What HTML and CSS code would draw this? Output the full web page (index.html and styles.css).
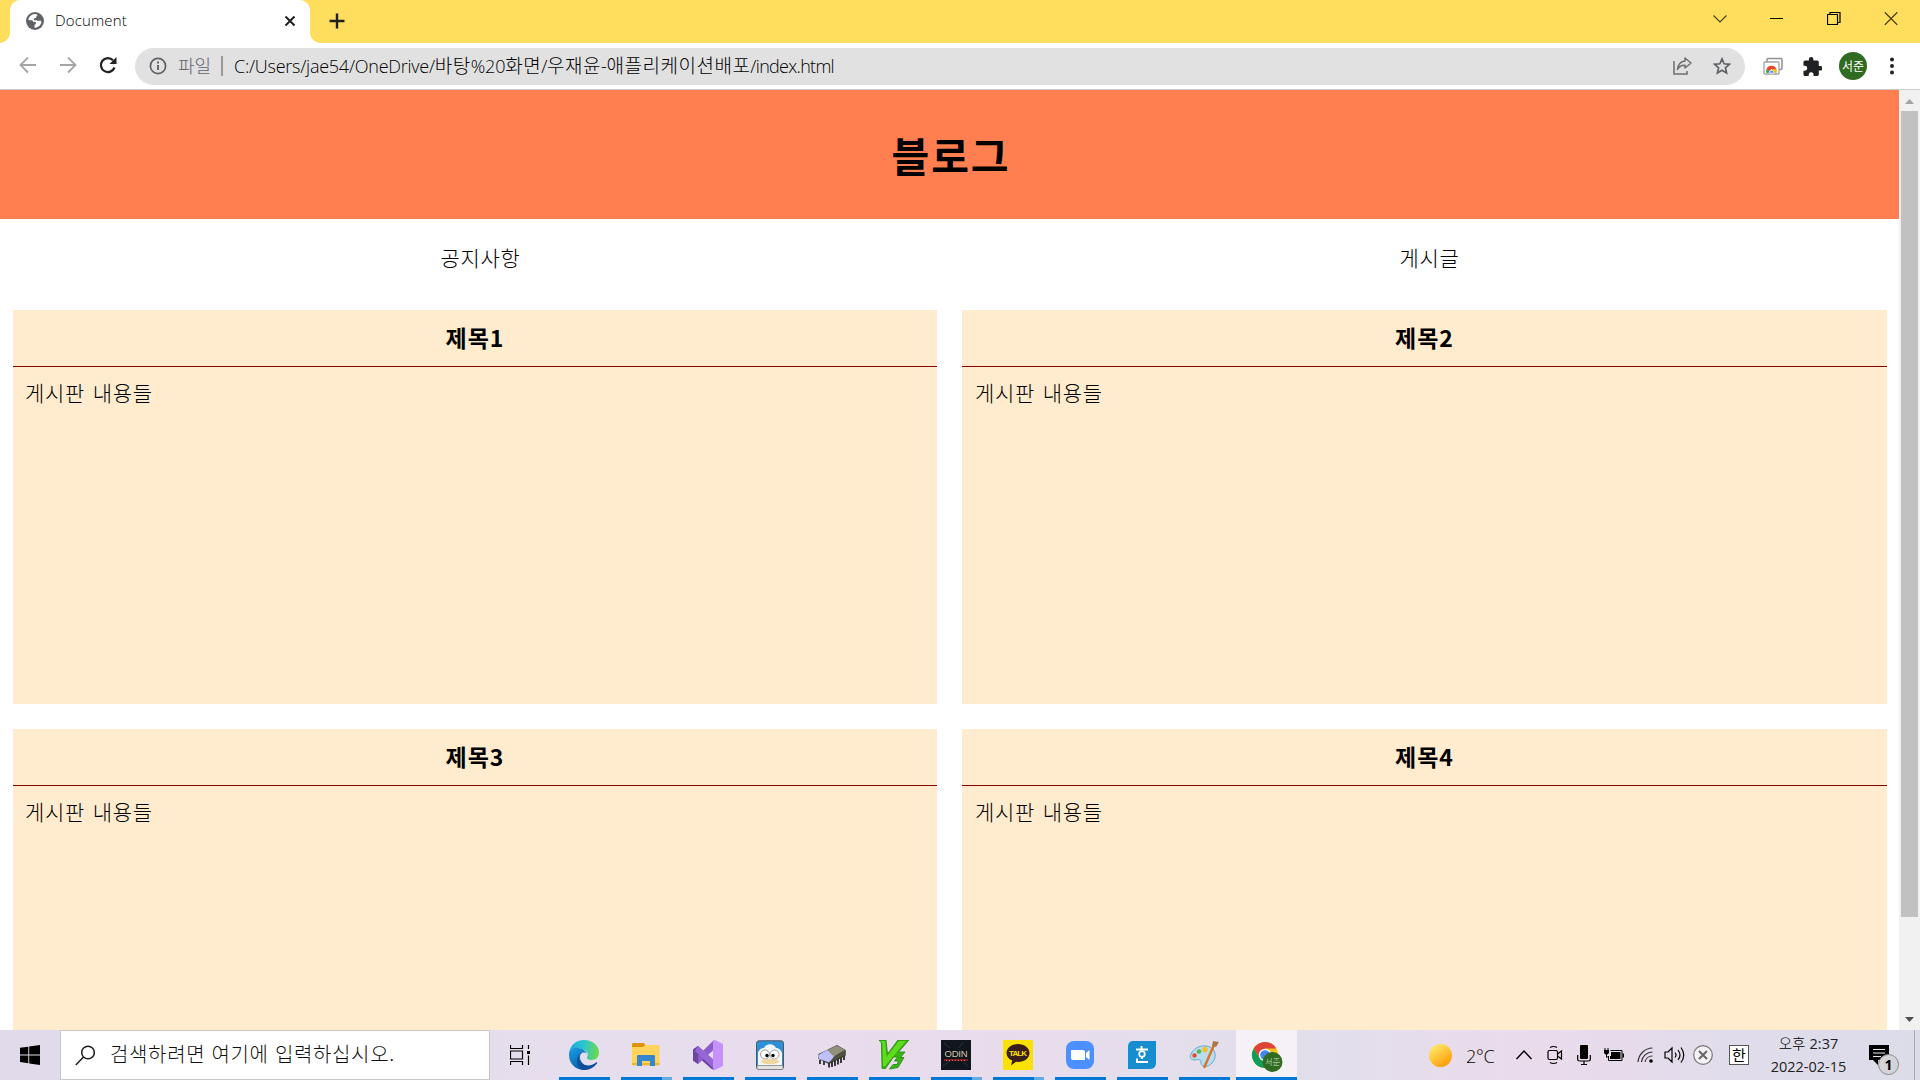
FILE: index.html
```html
<!DOCTYPE html>
<html lang="ko">
<head>
<meta charset="utf-8">
<title>Document</title>
<link rel="stylesheet" href="styles.css">
</head>
<body>
<div class="screen">
  <header class="tabstrip">
    <div class="tab">
      <svg class="favicon" viewBox="0 0 18 18"><circle cx="9" cy="9" r="9" fill="#5f6368"/><path d="M7.5 2.2C4.8 2.8 2.6 5 2.2 8l3.4.3c1 .2 1.2.8 1.5 1.5l2.2.2c.8.3.9 1.2.4 2l-1.200 1.100V15.800c3.600-.1 6.300-2.600 7.100-5.800l-1.300-1.500-2.400.4-1.600-.8-.9.400-1.300-.5c-.4-.6-.2-1.300.3-1.800l1.700-.4.300-1.400 1.200-1.300C10.500 2.100 8.900 1.900 7.500 2.200z" fill="#fff"/></svg>
      <span class="tab-title">Document</span>
      <svg class="tab-close" viewBox="0 0 12 12"><path d="M1.500 1.500l9 9M10.500 1.500l-9 9" stroke="#202124" stroke-width="2"/></svg>
    </div>
    <svg class="new-tab" viewBox="0 0 16 16"><path d="M8 .5v15M.5 8h15" stroke="#202124" stroke-width="2.400"/></svg>
    <div class="window-buttons">
      <svg viewBox="0 0 14 14"><path d="M.5 3.500L7 10l6.500-6.500" fill="none" stroke="#4a421f" stroke-width="1.200"/></svg>
      <svg viewBox="0 0 14 14"><path d="M0 6.500h13" stroke="#000"/></svg>
      <svg viewBox="0 0 14 14"><path d="M.5 2.500h10v10H.5zM3 2.500v-2h10v10h-2" fill="none" stroke="#000" stroke-width="1.200"/></svg>
      <svg viewBox="0 0 14 14"><path d="M.8.300l12.500 12.500M13.300.300L.8 12.800" stroke="#3b3418" stroke-width="1.200"/></svg>
    </div>
  </header>

  <nav class="toolbar">
    <svg class="nav-icon" viewBox="0 0 18 18"><path d="M17 9H2M9 1.500L1.500 9 9 16.500" fill="none" stroke="#a4a5a7" stroke-width="1.800"/></svg>
    <svg class="nav-icon" viewBox="0 0 18 18"><path d="M1 9h15M9 1.500L16.500 9 9 16.500" fill="none" stroke="#a4a5a7" stroke-width="1.800"/></svg>
    <svg class="nav-icon" viewBox="0 0 18 18"><path d="M15.500 11.500A7 7 0 1 1 14 4.200" fill="none" stroke="#202124" stroke-width="2.200"/><path d="M17.500 1v7h-7z" fill="#202124"/></svg>
    <div class="omnibox">
      <svg class="info" viewBox="0 0 18 18"><circle cx="9" cy="9" r="7.600" fill="none" stroke="#5f6368" stroke-width="1.700"/><path d="M9 8v5M9 4.600v1.900" stroke="#5f6368" stroke-width="1.900"/></svg>
      <span class="scheme">파일</span>
      <span class="divider"></span>
      <span class="url"><span class="latin">C:/Users/jae54/OneDrive/</span><span class="hangul">바탕</span><span class="latin">%20</span><span class="hangul">화면</span><span class="latin">/</span><span class="hangul">우재윤</span><span class="latin">-</span><span class="hangul">애플리케이션배포</span><span class="latin filename">/index.html</span></span>
      <svg class="share" viewBox="0 0 20 20"><path d="M1 5v13h13v-3" fill="none" stroke="#6b6e72" stroke-width="1.500"/><path d="M12 2l6 5-6 5V9.200C8.500 9 6 10.500 4.500 13.500 5 9 7.500 5.500 12 5z" fill="none" stroke="#6b6e72" stroke-width="1.500" stroke-linejoin="round"/></svg>
      <svg class="star" viewBox="0 0 18 18"><path d="M9 1.900l2.100 4.900 5.300.5-4 3.500 1.200 5.200L9 13.200 4.400 16l1.200-5.200-4-3.500 5.300-.5z" fill="none" stroke="#5f6368" stroke-width="1.700"/></svg>
    </div>
    <svg class="extension" viewBox="0 0 20 18"><rect x="4" y="1.500" width="15" height="11" rx="1" fill="#fff" stroke="#8f9194" stroke-width="1.500"/><rect x="1" y="5" width="15" height="12" rx="1" fill="#fff" stroke="#a0a2a5" stroke-width="1.300"/><path d="M3.500 16a5 5 0 0 1 0-4l3 1v3z" fill="#34a853"/><path d="M3.500 12a5.500 5.500 0 0 1 10 0H8.500l-2 2z" fill="#ea4335"/><path d="M9 12h4.500a5 5 0 0 1 0 4H9z" fill="#fbbc05"/><path d="M6 16a2.600 2.600 0 1 1 5.200 0z" fill="#4285f4" stroke="#fff" stroke-width=".7"/></svg>
    <svg class="puzzle" viewBox="1.500 1 21 21"><path d="M20.500 11H19V7c0-1.100-.9-2-2-2h-4V3.500a2.500 2.500 0 0 0-5 0V5H4c-1.100 0-2 .9-2 2v3.800h1.500a2.700 2.700 0 0 1 0 5.400H2V20c0 1.100.9 2 2 2h3.800v-1.500a2.700 2.700 0 0 1 5.400 0V22H17c1.100 0 2-.9 2-2v-4h1.500a2.500 2.500 0 0 0 0-5z" fill="#202124"/></svg>
    <span class="avatar">서준</span>
    <svg class="dots" viewBox="0 0 4 18"><g fill="#202124"><circle cx="2" cy="2.400" r="2"/><circle cx="2" cy="9" r="2"/><circle cx="2" cy="15.600" r="2"/></g></svg>
  </nav>

  <div class="viewport">
    <main class="page">
      <h1 class="banner">블로그</h1>
      <div class="menu"><span>공지사항</span><span>게시글</span></div>
      <div class="board">
        <article class="card"><h2>제목1</h2><p>게시판 내용들</p></article>
        <article class="card"><h2>제목2</h2><p>게시판 내용들</p></article>
        <article class="card"><h2>제목3</h2><p>게시판 내용들</p></article>
        <article class="card"><h2>제목4</h2><p>게시판 내용들</p></article>
      </div>
    </main>
    <aside class="scrollbar">
      <svg viewBox="0 0 21 21"><path d="M6 14l4.500-5 4.500 5z" fill="#a3a3a3"/></svg>
      <div class="thumb"></div>
      <svg class="down" viewBox="0 0 21 21"><path d="M6 8l4.500 5L15 8z" fill="#505050"/></svg>
    </aside>
  </div>

  <footer class="taskbar">
    <div class="start"><svg width="20" height="20" viewBox="0 0 20 20"><path d="M0 2.800L8.300 1.700v7.700H0zM9.200 1.500L20 0v9.400H9.200zM0 10.400h8.300V18.200L0 17zM9.200 10.400H20V20L9.200 18.400z"/></svg></div>
    <div class="search">
      <svg width="20" height="21" viewBox="0 0 20 21"><circle cx="13" cy="7.500" r="6.300" fill="none" stroke="#1d1d1d" stroke-width="1.500"/><path d="M8.500 12L.8 20" stroke="#1d1d1d" stroke-width="1.500"/></svg>
      <span>검색하려면 여기에 입력하십시오.</span>
    </div>
    <div class="taskview"><svg width="20" height="20" viewBox="0 0 20 20"><path d="M.5 0v3.500h12V0M.5 20v-3.500h12V20M.5 6h12v8H.5zM18.500 0v4M18.500 10.500V20" fill="none" stroke="#000" stroke-width="1.200"/><path d="M17 6h3v3h-3z"/></svg></div>
    <div class="apps">
      <div class="app"><svg viewBox="0 0 30 30"><defs><linearGradient id="ea" x1="0" y1=".3" x2="1" y2=".4"><stop offset="0" stop-color="#17a9e5"/><stop offset=".5" stop-color="#30c5cc"/><stop offset="1" stop-color="#68da4c"/></linearGradient><linearGradient id="eb" x1="0" y1="0" x2=".6" y2="1"><stop offset="0" stop-color="#1b9ee4"/><stop offset="1" stop-color="#0c59a4"/></linearGradient></defs><path d="M0 14C1 5 7 0 15 0c9 0 15 6 15 12.500C30 17 27 20 23 20c-4 0-6-1.500-5-3 1.500-2 1-5.500-3-7C10 7 3 8 0 14z" fill="url(#ea)"/><path d="M0 15C0 9 5 7 9 8c4 0 8 3 9 6-3-3-7-1-7 3 0 6 6 10 11 10-3 2.500-6 3-8 3C6 29.500 0 23 0 15z" fill="url(#eb)"/><path d="M12 13c-3 3-3 8 2 11 4 2.500 9 1.500 13-1.500 1-.7 1.500 0 1 1C24 29 18 31 13 29.500 7 27 6 18 12 13z" fill="#10509b"/></svg></div>
      <div class="app grouped"><svg viewBox="0 0 30 30"><path d="M1 4.500C1 3.600 1.600 3 2.500 3H13l1.500 3-2 4H1z" fill="#dc9300"/><path d="M1 7h11l2.500-2H27c1 0 1.500.5 1.500 1.500V24c0 .8-.5 1.300-1.500 1.300H2.500c-1 0-1.500-.5-1.500-1.300z" fill="#ffd35c"/><path d="M1 23h27.500v1c0 .8-.5 1.300-1.500 1.300H2.500C1.500 25.300 1 24.800 1 24z" fill="#eeb62e"/><path d="M6 26V16.500C6 15.500 6.600 15 7.500 15h15c1 0 1.500.5 1.500 1.500V26h-5v-5h-8v5z" fill="#3486cf"/></svg></div>
      <div class="app"><svg viewBox="0 0 30 30"><path d="M0 9.500L5 6l16 14.500V30l-3-1.500L5 17v6l-5-2.500z" fill="#68449d"/><path d="M0 20.500L21 0v9.500L5 24z" fill="#8d5ecb"/><path d="M0 9.500L5 6v18l-5-3.500z" fill="#6b479f"/><path d="M5 6l16 14v9L2 11z" fill="#9867d6"/><path d="M20 1l2-1 8 4v22l-8 4-2-1z" fill="#c692fa"/></svg></div>
      <div class="app"><svg viewBox="0 0 30 30"><rect x="1.500" y=".8" width="27" height="28.500" rx="2.500" fill="#2e91d8" stroke="#4b5663"/><path d="M3 28V13C4 9 7 8 9 8c2-5 10-5 12 0 3 0 5 2 6 5v15z" fill="#f3f6f9"/><circle cx="10" cy="14.500" r="4.500" fill="#fff" stroke="#888" stroke-width=".8"/><circle cx="19.500" cy="14.500" r="4.500" fill="#fff" stroke="#888" stroke-width=".8"/><circle cx="12" cy="15.500" r="1.700"/><circle cx="18" cy="15.500" r="1.700"/><ellipse cx="15" cy="21.500" rx="9" ry="2.800" fill="#eed79c"/><rect x="2" y="25.500" width="26" height="4" rx="1" fill="#e2e2df" stroke="#777" stroke-width=".7"/></svg></div>
      <div class="app"><svg viewBox="0 0 30 30"><path d="M3 20v4m4-3v4M12 21v6.500m3-7V27m3-7.500V26m3-8v6.500m3-8V23m3-8v5" stroke="#111" stroke-width="1.600"/><path d="M1.500 14L20 5l8.500 5v6L12 24 1.500 19z" fill="#33332b"/><path d="M1.500 15l9-5.500 8 3v4.500l-6.500 5.500L2 19z" fill="#bec0ff"/><path d="M10 10l10-4.500L28 10l-11 6.500z" fill="#91917b"/><path d="M17 16.500L28.500 10v5L12 23z" fill="#50503f"/></svg></div>
      <div class="app"><svg viewBox="0 0 30 30"><path d="M0 0h7l1.500 14L19 0h11L19.500 12H26l-4.500 5.500H25L19 27.500 10.500 29l3.500-4.500h4l1.500-3.500h-4l3-4h-4L6.500 28.500H3L2.500 3z" fill="#39b710" stroke="#1f8210" stroke-width=".8"/><path d="M1 1h5l1.500 16L20 1h7L6 26H4L3.500 3z" fill="#5fdc1d"/></svg></div>
      <div class="app grouped"><svg viewBox="0 0 30 30"><path d="M0 0h30v30H0z" fill="#11151c"/><path d="M3 3l6 5m13-6l-4 6M2 26l7-5m18 5l-5-4" stroke="#283646"/><path d="M3 20h24" stroke="#a51c20" stroke-width="1.500"/><path d="M5 20.500h20" stroke="#d88b7d" stroke-width=".8" stroke-dasharray="1 2"/><text x="15" y="16.500" text-anchor="middle" textLength="23" class="odin">ODIN</text></svg></div>
      <div class="app grouped"><svg viewBox="0 0 30 30"><rect width="30" height="30" rx="1" fill="#fae100"/><path d="M15 4c6.500 0 11.500 4 11.500 9s-5 9-11.500 9c-1 0-1 0-2-.2L8 25.500l1.200-5C5.700 19 3.500 16.500 3.500 13c0-5 5-9 11.500-9z" fill="#3a1d1d"/><text x="15" y="16.300" text-anchor="middle" textLength="18" class="talk">TALK</text></svg></div>
      <div class="app"><svg viewBox="0 0 30 30"><rect x="1" y="1" width="28" height="28" rx="8" fill="#4c8fff"/><path d="M6 10h12c1.500 0 2 1 2 2v8H8c-1.500 0-2-1-2-2zm15 3l3.500-3v10L21 17z" fill="#fff"/></svg></div>
      <div class="app"><svg viewBox="0 0 30 30"><path d="M6 1h23v22c0 3-2 6-6 6H1V7c0-4 2-6 5-6z" fill="#168dcf"/><path d="M14.500 6v3M9 9.500h12M10 18.500V22h11M15 17v2" fill="none" stroke="#fff" stroke-width="2"/><circle cx="15" cy="14" r="2.800" fill="none" stroke="#fff" stroke-width="1.800"/></svg></div>
      <div class="app"><svg viewBox="0 0 30 30"><path d="M2 14C5 7 14 4 21 7c6 3 7 11 2 16-4 5-11 4-11 0 0-5-3-3-6-3-4 0-6-2-4-6z" fill="#b9dcef" stroke="#6aaac9"/><circle cx="5.500" cy="15.500" r="2.200" fill="#e74b3a"/><circle cx="10" cy="11.500" r="2.300" fill="#51b84b"/><circle cx="16" cy="9.500" r="2.700" fill="#f7bd25"/><path d="M25 5L15 28" stroke="#d47726" stroke-width="2.500"/><path d="M23 6l1-5 6 1-3 5z" fill="#ad7744"/></svg></div>
      <div class="app active"><svg viewBox="0 0 32 30"><circle cx="14" cy="14" r="13" fill="#fbc116"/><path d="M2.700 7.500A13 13 0 0 1 25.300 7.500H14L8.500 17z" fill="#db4437"/><path d="M2.700 7.500A13 13 0 0 0 14 27l5-10H8.500z" fill="#0f9d58"/><circle cx="14" cy="14" r="6.200" fill="#fff"/><circle cx="14" cy="14" r="4.800" fill="#4285f4"/><circle cx="21.500" cy="21" r="10" fill="#306b22"/><text x="21.500" y="24.300" text-anchor="middle" class="badge-name">서준</text></svg></div>
    </div>
    <div class="tray">
      <i class="sun"></i>
      <span class="temp">2°C</span>
      <svg width="16" height="20" viewBox="0 0 16 20"><path d="M.5 14L8 6l7.500 8" fill="none" stroke="#000" stroke-width="1.400"/></svg>
      <svg width="16" height="20" viewBox="0 0 16 20"><rect x="1" y="5.500" width="9.500" height="9" rx="1.500" fill="none" stroke="#000" stroke-width="1.200"/><path d="M10.500 9l4-3v8l-4-3M3 2.500q3.500-2 7 0M3 17.500q3.500 2 7 0" fill="none" stroke="#000" stroke-width="1.200"/></svg>
      <svg width="14" height="20" viewBox="0 0 14 20"><rect x="3" y="0" width="8" height="14" rx="1"/><path d="M.7 10v4.500q0 1.500 2 1.500h8.600q2 0 2-1.500V10M7 16v3.500M4 19.500h6" fill="none" stroke="#000" stroke-width="1.200"/></svg>
      <svg width="20" height="14" viewBox="0 0 20 14"><path d="M6.500 2.500h11.500v10H4.500V8" fill="none" stroke="#000"/><path d="M7 4h9.500v7H6V8h1zM18.500 5.500H20v4h-1.500zM0 2h5v3L3.500 6.500h-2L0 5zM.5 0h1v2h-1zM3.500 0h1v2h-1zM2 6h1v2.500h2v1H2z"/></svg>
      <svg width="16" height="16" viewBox="0 0 16 16"><path d="M1 15A15 15 0 0 1 15.500 1M4.500 15A11 11 0 0 1 15.500 5M8 15a7.500 7.500 0 0 1 7.500-6" fill="none" stroke="#333" stroke-width="1.200"/><circle cx="14" cy="14" r="1.800"/></svg>
      <svg width="21" height="18" viewBox="0 0 21 18"><path d="M1 6h3l4-4v14l-4-4H1zM11 6.500q2 2.500 0 5M14 4q4 5 0 10M17 1.500q5.500 7.500 0 15" fill="none" stroke="#000" stroke-width="1.200"/></svg>
      <svg width="20" height="20" viewBox="0 0 20 20"><circle cx="10" cy="10" r="9.300" fill="#f4f0f4" stroke="#777" stroke-width="1.200"/><path d="M6 6l8 8M14 6l-8 8" stroke="#666" stroke-width="2"/></svg>
      <span class="ime">한</span>
      <div class="clock"><span>오후 <b>2:37</b></span><span class="date">2022-02-15</span></div>
      <div class="notice"><svg width="20" height="20" viewBox="0 0 20 20"><path d="M0 0h20v15H9v5l-5-5H0z"/><path d="M4 4.500h12M4 8h12M4 11.500h8" stroke="#e9e5ee" stroke-width="1.200"/></svg><span class="count">1</span></div>
      <i class="peek"></i>
    </div>
  </footer>
</div>
</body>
</html>
```
FILE: styles.css
```css
* { box-sizing: border-box; }
body { margin: 0; background: #fff; color: #000; font-family: "Noto Sans CJK KR", sans-serif; font-weight: 300; }
svg { display: block; flex: none; }
.screen { display: flex; flex-direction: column; width: 1920px; height: 1080px; overflow: hidden; }

/* Tab strip */
.tabstrip { display: flex; flex: none; height: 43px; padding-left: 10px; background: #ffdd5d; }
.tab { position: relative; display: flex; align-items: center; width: 300px; padding: 0 14px 1px 16px; background: #fff; border-radius: 10px 10px 0 0; }
.tab::before, .tab::after { content: ""; position: absolute; bottom: 0; width: 10px; height: 10px; }
.tab::before { left: -10px; background: radial-gradient(circle at 0 0, transparent 9.500px, #fff 10px); }
.tab::after { right: -10px; background: radial-gradient(circle at 100% 0, transparent 9.500px, #fff 10px); }
.favicon { width: 18px; height: 18px; }
.tab-title { flex: 1; margin: 0 0 2px 11px; font: 300 15px/20px "Open Sans", sans-serif; letter-spacing: .15px; color: #000; }
.tab-close { width: 12px; height: 12px; }
.new-tab { width: 16px; height: 16px; margin: 13px 0 0 19px; }
.window-buttons { display: flex; gap: 43px; margin: 12px 22px 0 auto; }
.window-buttons svg { width: 14px; height: 14px; }

/* Toolbar */
.toolbar { display: flex; flex: none; align-items: center; height: 47px; padding: 0 26px 0 19px; background: #fff; border-bottom: 1px solid #cacaca; }
.nav-icon { width: 18px; height: 18px; margin-right: 22px; margin-bottom: 2px; }
.nav-icon:nth-child(3) { margin-right: 18px; }
.omnibox { display: flex; flex: none; align-items: center; width: 1610px; height: 37px; padding: 0 14px 0 14px; border-radius: 19px; background: #e1e1e1; color: #000; }
.info { width: 18px; height: 18px; }
.scheme { width: 34px; margin: 0 0 2px 11px; font-size: 18px; line-height: 24px; color: #5f6368; }
.divider { width: 2px; height: 20px; margin: 0 11px 0 9px; background: #999; }
.url { display: flex; flex: 1; align-items: baseline; margin-bottom: 2px; line-height: 26px; white-space: nowrap; }
.latin { font-family: "Open Sans", sans-serif; font-size: 18px; letter-spacing: -.25px; }
.latin.filename { letter-spacing: -.7px; }
.hangul { font-size: 19px; letter-spacing: .5px; }
.share { width: 20px; height: 20px; margin-right: 20px; }
.star { width: 18px; height: 18px; }
.extension { width: 20px; height: 18px; margin-left: 18px; }
.puzzle { width: 19px; height: 19px; margin-left: 20px; }
.avatar { width: 28px; height: 28px; margin-left: 17px; border-radius: 50%; background: #306b22; color: #fff; font-size: 12px; font-weight: 400; line-height: 27px; text-align: center; }
.dots { width: 4px; height: 18px; margin-left: 23px; }

/* Page content */
.viewport { display: flex; flex: 1; min-height: 0; }
.page { width: 1899px; overflow: hidden; background: #fff; }
.banner { height: 129px; margin: 0; padding-left: 3px; background: #ff7f50; font-size: 41px; font-weight: 700; line-height: 128px; letter-spacing: 1.900px; text-align: center; }
.menu { display: flex; justify-content: space-around; height: 91px; padding: 22px 0 0 1px; font-size: 21px; line-height: 33px; letter-spacing: .7px; }
.board { display: grid; grid-template-columns: 924px 925px; grid-template-rows: 394px 394px; gap: 25px; padding-left: 13px; }
.card { background: #ffebcd; }
.card h2 { height: 57px; margin: 0; border-bottom: 1px solid #8b0000; font-size: 23px; font-weight: 700; line-height: 55px; letter-spacing: 1px; text-align: center; }
.card p { margin: 0; padding: 9px 12px; font-size: 21px; line-height: 33px; letter-spacing: .7px; word-spacing: 1px; }
.card:nth-child(even) p { padding-left: 13px; }
.scrollbar { display: flex; flex-direction: column; width: 21px; background: #f1f1f1; }
.scrollbar svg { width: 21px; height: 21px; }
.thumb { width: 17px; height: 806px; margin: 0 0 0 2px; background: #c1c1c1; }
.scrollbar .down { margin-top: auto; }

/* Taskbar */
.taskbar { display: flex; flex: none; height: 50px; background: linear-gradient(90deg, #e1daea 0, #e6deed 30%, #e9dcec 50%, #e2dfeb 68%, #eadbeb 80%, #e1dceb 90%, #dcdce9); }
.start { display: flex; flex: none; align-items: center; width: 60px; padding-left: 20px; }
.search { display: flex; flex: none; align-items: center; width: 430px; padding-left: 14px; background: #fff; border: 1px solid #c8c8c8; font-size: 20px; color: #111; }
.search span { margin: 0 0 2px 15px; line-height: 40px; letter-spacing: .65px; white-space: nowrap; }
.taskview { display: flex; flex: none; align-items: center; width: 63px; padding-left: 20px; }
.apps { display: flex; flex: none; }
.app { position: relative; width: 62px; padding-top: 10px; }
.app svg { width: 30px; height: 30px; margin: 0 auto; }
.app::after { content: ""; position: absolute; left: 6px; bottom: 0; width: 51px; height: 3px; background: #0078d7; }
.grouped::after { background: linear-gradient(90deg, #0078d7 41px, #62ace3 41px); }
.app.active { width: 61px; margin-left: 1px; background: #f5f1f7; }
.active::after { left: 0; width: 61px; }
.app.active svg { width: 32px; height: 32px; }
.odin { font: 9.500px "Liberation Sans", sans-serif; fill: #d5c4ad; }
.talk { font: bold 8px "Liberation Sans", sans-serif; fill: #fae100; }
.badge-name { font-size: 8.500px; fill: #d8e6d4; }
.tray { display: grid; flex: none; grid-template-columns: 37px 50px 31px 30px 27px 33px 27px 29px 36px 42px 98px 45px 6px; align-items: center; justify-items: start; margin-left: 132px; }
.sun { width: 23px; height: 23px; border-radius: 50%; background: linear-gradient(145deg, #ffe15f 20%, #ff9800 90%); }
.temp { padding-top: 2px; font: 300 18px/24px "Open Sans", sans-serif; letter-spacing: -.3px; color: #000; }
.ime { width: 20px; height: 20px; border: 1px solid #555; background: #fff; font-size: 15px; font-weight: 400; line-height: 17px; text-align: center; }
.clock { display: flex; flex-direction: column; align-items: center; width: 75px; padding-bottom: 2px; font-size: 14.500px; line-height: 23px; white-space: nowrap; }
.clock b, .date { font-family: "Open Sans", sans-serif; font-weight: 400; color: #222; }
.notice { position: relative; width: 30px; height: 30px; padding-top: 5px; }
.count { position: absolute; left: 9px; top: 14px; width: 21px; height: 21px; border: 1px solid #888; border-radius: 50%; background: #d5d4da; font: bold 14px/19px "Open Sans", sans-serif; text-align: center; }
.peek { width: 1px; height: 50px; background: #aaa7b2; }
```
